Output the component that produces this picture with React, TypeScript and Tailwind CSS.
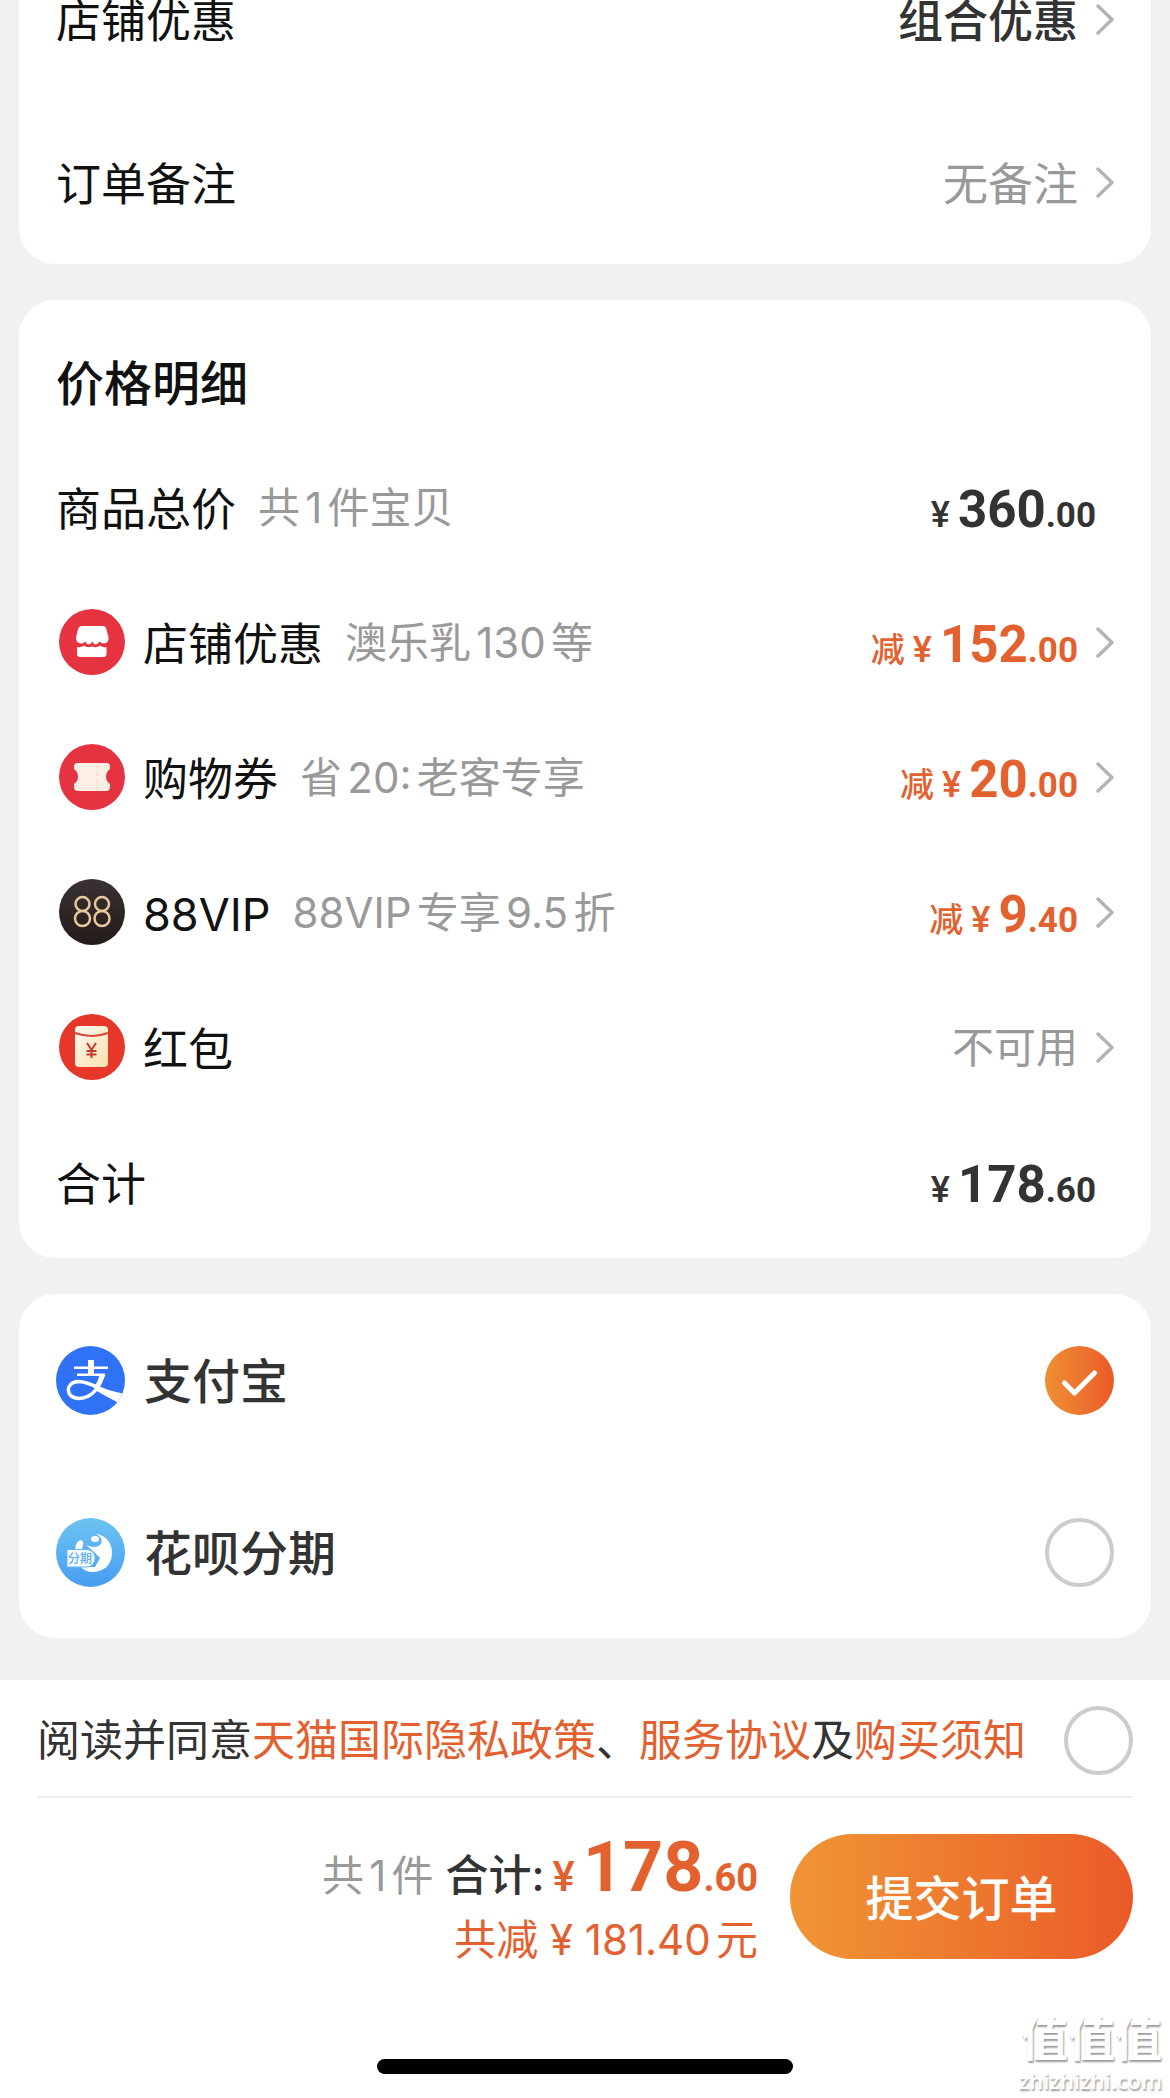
import { useState } from 'react'
import type { ReactNode } from 'react'

function Chevron() {
  return (
    <svg className="ml-[18px] h-8 w-[18px] shrink-0" viewBox="0 0 18 32" fill="none" stroke="#b4b4b4" strokeWidth="3.500" strokeLinecap="round" strokeLinejoin="round">
      <path d="M2 2L16 15.500L2 29" />
    </svg>
  )
}

function StoreIcon() {
  return (
    <svg className="size-[69px] shrink-0" viewBox="0 0 69 69">
      <circle cx="36" cy="34" r="33" fill="#e63342" />
      <path d="M26 18h21q2 0 3 2l2.500 9q.5 6-4.500 6.500q-3 0-4.500-2q-2 3-4 3t-3-3q-2 3-4 3t-3-3q-2 2.500-5 2q-5-1-4.500-6.500l2.500-9q1-2 3.500-2z" fill="#fff" />
      <path d="M21 39q4 1 7-1.500q3 3 8 1q5 2 8-1q3 2.500 6.500 1.500v7q0 3-3 3H24q-3 0-3-3z" fill="#fff" />
    </svg>
  )
}

function CouponIcon() {
  return (
    <svg className="size-[69px] shrink-0" viewBox="0 0 69 69">
      <circle cx="36" cy="34" r="33" fill="#e63342" />
      <path d="M22 20h28q4 0 4 3v3q-4 3-4 7.500t4 7.500v3q0 4-4 4H22q-4 0-4-4v-3q4-3 4-7.500t-4-7.500v-3q0-3 4-3z" fill="#fdeee6" />
      <path d="M41.500 22v25" stroke="#f6d9c9" strokeWidth="1.500" strokeDasharray="4 3" />
    </svg>
  )
}

function VipIcon() {
  return (
    <svg className="size-[69px] shrink-0" viewBox="0 0 69 69">
      <defs>
        <linearGradient id="vip" x1="0" y1="0" x2="0" y2="1">
          <stop offset="0" stopColor="#3a3232" />
          <stop offset="1" stopColor="#221b19" />
        </linearGradient>
      </defs>
      <circle cx="36" cy="34" r="33" fill="url(#vip)" />
      <g fill="none" stroke="#e8c79c" strokeWidth="2.500">
        <ellipse cx="26.500" cy="26" rx="7" ry="7" />
        <ellipse cx="26.500" cy="40.500" rx="7.500" ry="7.500" />
        <ellipse cx="46" cy="26" rx="7" ry="7" />
        <ellipse cx="46" cy="40.500" rx="7.500" ry="7.500" />
      </g>
    </svg>
  )
}

function RedPacketIcon() {
  return (
    <svg className="size-[69px] shrink-0" viewBox="0 0 69 69">
      <defs>
        <linearGradient id="packet" x1="0" y1="0" x2="1" y2="1">
          <stop offset="0" stopColor="#fffaf0" />
          <stop offset="1" stopColor="#fbdfae" />
        </linearGradient>
      </defs>
      <circle cx="36" cy="34" r="33" fill="#e7372b" />
      <rect x="19" y="13" width="33" height="41" rx="4" fill="url(#packet)" />
      <path d="M19 20q17 6 33 0" fill="none" stroke="#d9483a" strokeWidth="2" />
      <path d="M31 30l4.500 7l4.500-7M35.500 37v8M30.500 38h10M30.500 41.500h10" fill="none" stroke="#c5382c" strokeWidth="2" />
    </svg>
  )
}

function AlipayIcon() {
  return (
    <svg className="size-[69px] shrink-0" viewBox="0 0 69 69">
      <clipPath id="alipay-disc">
        <circle cx="34.500" cy="34.500" r="34.500" />
      </clipPath>
      <g clipPath="url(#alipay-disc)">
        <rect width="69" height="69" fill="#2f72f6" />
        <path d="M18 20.500h34v2.500H18zM32 14h6v15h-6zM21 27.500h28v2.500H21z" fill="#fff" />
        <path d="M47 28.500C44 40 37 52 23 52.500C9 52.500 9 36 22 35.500C32 35.500 40 41 50 45" fill="none" stroke="#fff" strokeWidth="3.500" />
        <path d="M43.500 29h6q-3 7-7 13l-4-2q4-5 5-11z" fill="#fff" />
        <path d="M34 37.500L42 40q8 4 27 8l-5 9.500q-14-7-24-13z" fill="#fff" />
      </g>
    </svg>
  )
}

function HuabeiIcon() {
  return (
    <svg className="size-[69px] shrink-0" viewBox="0 0 69 69">
      <defs>
        <linearGradient id="huabei" x1="0" y1="0" x2="0" y2="1">
          <stop offset="0" stopColor="#6cc4f1" />
          <stop offset="1" stopColor="#489cf3" />
        </linearGradient>
      </defs>
      <circle cx="34.500" cy="34.500" r="34.500" fill="url(#huabei)" />
      <path d="M40 15.500q16 4 16 20q-1 17-19 18.500q-8 0-12-5h14l5-9l-8-8l-6-5q9 4 14 0q5-6-4-11.500z" fill="#fff" />
      <ellipse cx="39" cy="21" rx="4" ry="3" fill="#fff" />
      <path d="M19 31q1-8 6-9q4 1 1 9z" fill="#fff" />
      <path d="M11 31.500h19c12 0 12 17.500 0 17.500H11z" fill="#f2faff" stroke="#6cb4f2" strokeWidth="1" />
      <text x="12" y="45" fontSize="12" fontWeight="500" fill="#62aef0">分期</text>
    </svg>
  )
}

function Row({ icon, label, note, arrow = true, children }: { icon?: ReactNode; label: string; note?: string; arrow?: boolean; children: ReactNode }) {
  const content = (
    <>
      {icon && <span className="mr-[18px]">{icon}</span>}
      <span className="pt-1 text-[45px] leading-[60px] text-[#111]">{label}</span>
      {note && <span className="ml-[22px] text-[42px] leading-[60px] text-[#999] [text-autospace:normal]">{note}</span>}
      <span className="ml-auto">{children}</span>
    </>
  )
  if (!arrow) {
    return <div className="flex h-[135px] items-center pr-[18px]">{content}</div>
  }
  return (
    <button type="button" className="flex h-[135px] w-full items-center text-left">
      {content}
      <Chevron />
    </button>
  )
}

function Price({ value, off = false }: { value: string; off?: boolean }) {
  const [int, dec] = value.split('.')
  return (
    <span className={off ? 'flex items-baseline pt-2 font-bold text-[#e3602f]' : 'flex items-baseline pt-2 font-bold text-[#333]'}>
      {off && <span className="mr-2 text-[34px] font-medium">减</span>}
      <span className="mr-2 font-[Roboto] text-[36px] font-medium">¥</span>
      <span className="font-[Roboto] text-[51px] leading-[60px]">{int}</span>
      <span className="font-[Roboto] text-[35px]">.{dec}</span>
    </span>
  )
}

function PayOption({ id, icon, label, checked, onChange }: { id: string; icon: ReactNode; label: string; checked: boolean; onChange: () => void }) {
  return (
    <label htmlFor={id} className="flex h-[172px] items-center">
      {icon}
      <span className="ml-[19px] pt-1 text-[48px] leading-[64px] font-medium text-[#333]">{label}</span>
      <span className="relative ml-auto size-[69px]">
        <input
          id={id}
          type="radio"
          name="pay"
          checked={checked}
          onChange={onChange}
          className="peer block size-[69px] appearance-none rounded-full border-4 border-[#ccc] checked:border-0 checked:bg-linear-to-r checked:from-[#ee8f33] checked:to-[#ea5a29]"
        />
        <svg className="pointer-events-none absolute inset-0 hidden peer-checked:block" viewBox="0 0 69 69" fill="none" stroke="#fff" strokeWidth="5" strokeLinecap="round" strokeLinejoin="round">
          <path d="M19.500 37L29.500 47L49.500 27" />
        </svg>
      </span>
    </label>
  )
}

export default function App() {
  const [pay, setPay] = useState('alipay')
  const [agreed, setAgreed] = useState(false)

  return (
    <div lang="zh-CN" className="flex min-h-screen flex-col bg-[#f1f1f1] font-[Inter,'Noto_Sans_CJK_SC',sans-serif]">
      <main className="flex flex-col gap-9 px-[19px] pb-[41px]">
        <section className="rounded-b-[36px] bg-white px-[37px]">
          <button type="button" className="mb-[61px] flex h-10 w-full items-center text-[45px] leading-10">
            <span className="pt-1 text-[#111]">店铺优惠</span>
            <span className="ml-auto pt-1 font-medium text-[#333]">组合优惠</span>
            <Chevron />
          </button>
          <button type="button" className="flex h-[163px] w-full items-center text-[45px]">
            <span className="pt-1 text-[#111]">订单备注</span>
            <span className="ml-auto pt-1 text-[#999]">无备注</span>
            <Chevron />
          </button>
        </section>

        {/* Price breakdown */}
        <section className="rounded-[36px] bg-white px-[37px] pb-2">
          <h2 className="pt-[52px] pb-6 text-[48px] leading-[64px] font-medium text-[#111]">价格明细</h2>
          <Row label="商品总价" note="共1件宝贝" arrow={false}>
            <Price value="360.00" />
          </Row>
          <Row icon={<StoreIcon />} label="店铺优惠" note="澳乐乳130等">
            <Price value="152.00" off />
          </Row>
          <Row icon={<CouponIcon />} label="购物券" note="省20:老客专享">
            <Price value="20.00" off />
          </Row>
          <Row icon={<VipIcon />} label="88VIP" note="88VIP专享9.5折">
            <Price value="9.40" off />
          </Row>
          <Row icon={<RedPacketIcon />} label="红包">
            <span className="text-[42px] text-[#999]">不可用</span>
          </Row>
          <Row label="合计" arrow={false}>
            <Price value="178.60" />
          </Row>
        </section>

        {/* Payment methods */}
        <section className="rounded-[36px] bg-white px-[37px]">
          <PayOption id="alipay" icon={<AlipayIcon />} label="支付宝" checked={pay === 'alipay'} onChange={() => setPay('alipay')} />
          <PayOption id="huabei" icon={<HuabeiIcon />} label="花呗分期" checked={pay === 'huabei'} onChange={() => setPay('huabei')} />
        </section>
      </main>

      <footer className="relative mt-auto bg-white px-[37px]">
        <div className="flex h-[118px] items-center justify-between border-b-2 border-[#eee] pt-1">
          <p className="text-[43px] leading-[60px] whitespace-nowrap text-[#333]">
            <label htmlFor="agree">阅读并同意</label>
            <a href="#privacy" className="text-[#e3602f]">天猫国际隐私政策</a>、
            <a href="#service" className="text-[#e3602f]">服务协议</a>及
            <a href="#notice" className="text-[#e3602f]">购买须知</a>
          </p>
          <input
            id="agree"
            type="checkbox"
            checked={agreed}
            onChange={(e) => setAgreed(e.target.checked)}
            className="size-[69px] shrink-0 appearance-none rounded-full border-4 border-[#ccc] checked:border-[#ea5a29] checked:bg-[#ea5a29]"
          />
        </div>

        <div className="flex h-[161px] items-center justify-end gap-8 pt-9">
          <div className="flex flex-col items-end pt-3">
            <div className="flex items-baseline leading-[64px]">
              <span className="text-[42px] text-[#999] [text-autospace:normal]">共1件</span>
              <span className="ml-3 text-[43px] font-medium text-[#333]">合计:</span>
              <span className="mx-2 font-[Roboto] text-[42px] font-medium text-[#e3602f]">¥</span>
              <span className="font-[Roboto] text-[70px] font-bold text-[#e3602f]">178</span>
              <span className="font-[Roboto] text-[38px] font-bold text-[#e3602f]">.60</span>
            </div>
            <div className="text-[42px] leading-[60px] text-[#e3602f] [text-autospace:normal]">共减 ¥ 181.40元</div>
          </div>
          <button type="button" className="h-[125px] w-[343px] rounded-full bg-linear-to-r from-[#ef9535] to-[#ea5a29] pt-1 text-[48px] font-medium text-white">
            提交订单
          </button>
        </div>

        <div className="mt-[100px] pb-6">
          <div className="mx-auto h-[15px] w-[38%] rounded-full bg-black" />
        </div>

        {/* Site watermark */}
        <div className="absolute right-2 bottom-1 flex flex-col items-end text-white [text-shadow:1px_2px_2px_#999]">
          <span className="text-[47px] leading-[54px] font-bold">值值值</span>
          <span className="font-['Open_Sans'] text-[22px] leading-7 font-semibold">zhizhizhi.com</span>
        </div>
      </footer>
    </div>
  )
}
